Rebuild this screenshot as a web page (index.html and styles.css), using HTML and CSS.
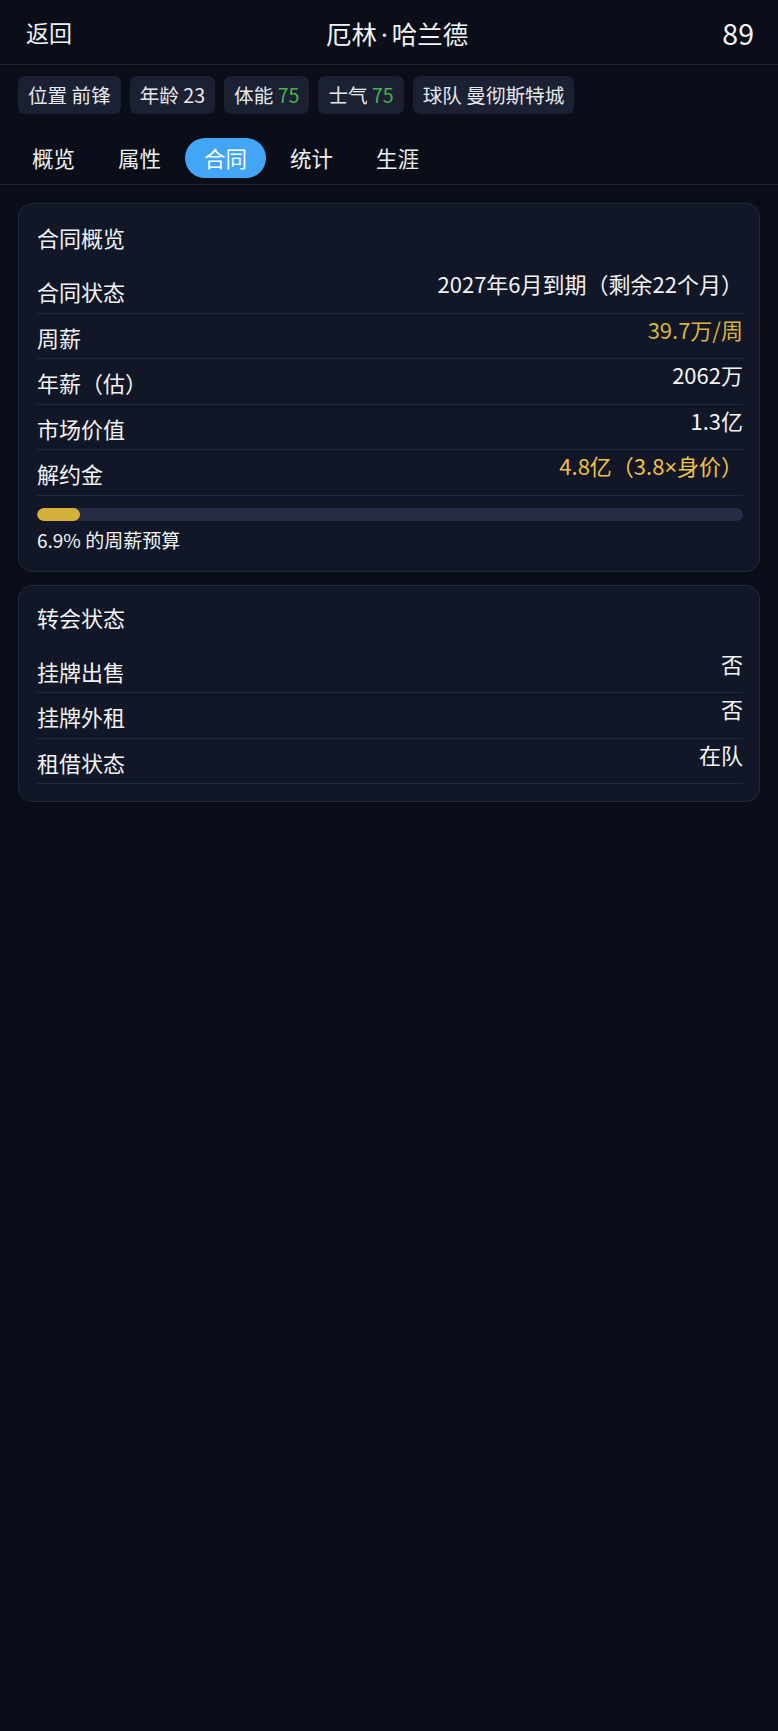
FILE: index.html
```html
<!DOCTYPE html>
<html lang="zh-CN">
<head>
<meta charset="utf-8">
<title>厄林·哈兰德</title>
<link rel="stylesheet" href="styles.css">
</head>
<body>
<header class="topbar">
  <span class="back">返回</span>
  <span class="title">厄林<span class="latin dot">·</span>哈兰德</span>
  <span class="rating">89</span>
</header>
<div class="chips">
  <span class="chip">位置 前锋</span>
  <span class="chip">年龄 23</span>
  <span class="chip">体能 <em class="good">75</em></span>
  <span class="chip">士气 <em class="good">75</em></span>
  <span class="chip">球队 曼彻斯特城</span>
</div>
<nav class="tabs">
  <span class="tab">概览</span>
  <span class="tab">属性</span>
  <span class="tab active">合同</span>
  <span class="tab">统计</span>
  <span class="tab">生涯</span>
</nav>
<main class="content">
  <section class="card">
    <h2 class="card-title">合同概览</h2>
    <div class="row"><span class="label">合同状态</span><span class="value">2027年6月到期（剩余22个月）</span></div>
    <div class="row"><span class="label">周薪</span><span class="value gold">39.7万/周</span></div>
    <div class="row"><span class="label">年薪（估）</span><span class="value">2062万</span></div>
    <div class="row"><span class="label">市场价值</span><span class="value">1.3亿</span></div>
    <div class="row"><span class="label">解约金</span><span class="value amber">4.8亿（3.8<span class="latin">×</span>身价）</span></div>
    <div class="bar"><div class="bar-fill" style="width: 6.1%"></div></div>
    <div class="caption">6.9% 的周薪预算</div>
  </section>
  <section class="card card-tight">
    <h2 class="card-title">转会状态</h2>
    <div class="row"><span class="label">挂牌出售</span><span class="value">否</span></div>
    <div class="row"><span class="label">挂牌外租</span><span class="value">否</span></div>
    <div class="row"><span class="label">租借状态</span><span class="value">在队</span></div>
  </section>
</main>
</body>
</html>
```

FILE: styles.css
```css
html, body {
  margin: 0;
  padding: 0;
  background: #0a0e18;
}
body {
  min-height: 1731px;
  color: #f2f3f5;
  font-family: "Noto Sans CJK SC", "Noto Sans", sans-serif;
}
.latin {
  font-family: "Noto Sans", sans-serif;
}
.topbar {
  height: 65px;
  box-sizing: border-box;
  padding: 0 24px 0 26px;
  display: flex;
  align-items: center;
  justify-content: space-between;
  border-bottom: 1px solid #1f2535;
}
.back {
  font-size: 23px;
}
.title {
  font-size: 25.5px;
}
.title .dot {
  padding: 0 4px;
}
.rating {
  font-size: 28.5px;
}
.chips {
  display: flex;
  gap: 9px;
  padding: 11px 18px 0;
}
.chip {
  height: 38px;
  line-height: 38px;
  padding: 0 10px;
  border-radius: 7px;
  background: #1b2132;
  font-size: 19.6px;
  color: #e6e8ee;
}
.chip .good {
  font-style: normal;
  color: #4caf50;
}
.tabs {
  display: flex;
  gap: 5px;
  margin-top: 24px;
  padding: 0 12px 6px 13px;
  border-bottom: 1px solid #1f2535;
}
.tab {
  height: 40px;
  line-height: 40px;
  padding: 0 19px;
  border-radius: 20px;
  font-size: 21.5px;
  color: #eef0f3;
}
.tab.active {
  background: #42a5f5;
  color: #ffffff;
}
.content {
  display: flex;
  flex-direction: column;
  gap: 13px;
  padding: 18px 18px;
}
.card {
  background: #111726;
  border: 1px solid #232a3c;
  border-radius: 14px;
  padding: 18px 16px 18px 18px;
}
.card-title {
  margin: 0 0 16px;
  font-size: 22px;
  line-height: 30px;
  font-weight: normal;
}
.card-tight {
  padding-top: 16px;
  padding-bottom: 17px;
}
.card-tight .card-title {
  margin-bottom: 16px;
}
.row {
  display: flex;
  justify-content: space-between;
  align-items: flex-start;
  border-bottom: 1px solid #222a3c;
}
.label {
  font-size: 22px;
  line-height: 28px;
  padding: 9px 0 7.5px;
}
.value {
  font-size: 22px;
  line-height: 30px;
}
.value.gold {
  color: #dbb33c;
}
.value.amber {
  color: #f3c046;
}
.bar {
  margin-top: 12px;
  height: 13px;
  border-radius: 7px;
  background: #262c44;
  overflow: hidden;
}
.bar-fill {
  height: 100%;
  border-radius: 7px;
  background: #d5b03a;
}
.caption {
  margin-top: 6px;
  font-size: 19px;
  line-height: 26px;
}
```
